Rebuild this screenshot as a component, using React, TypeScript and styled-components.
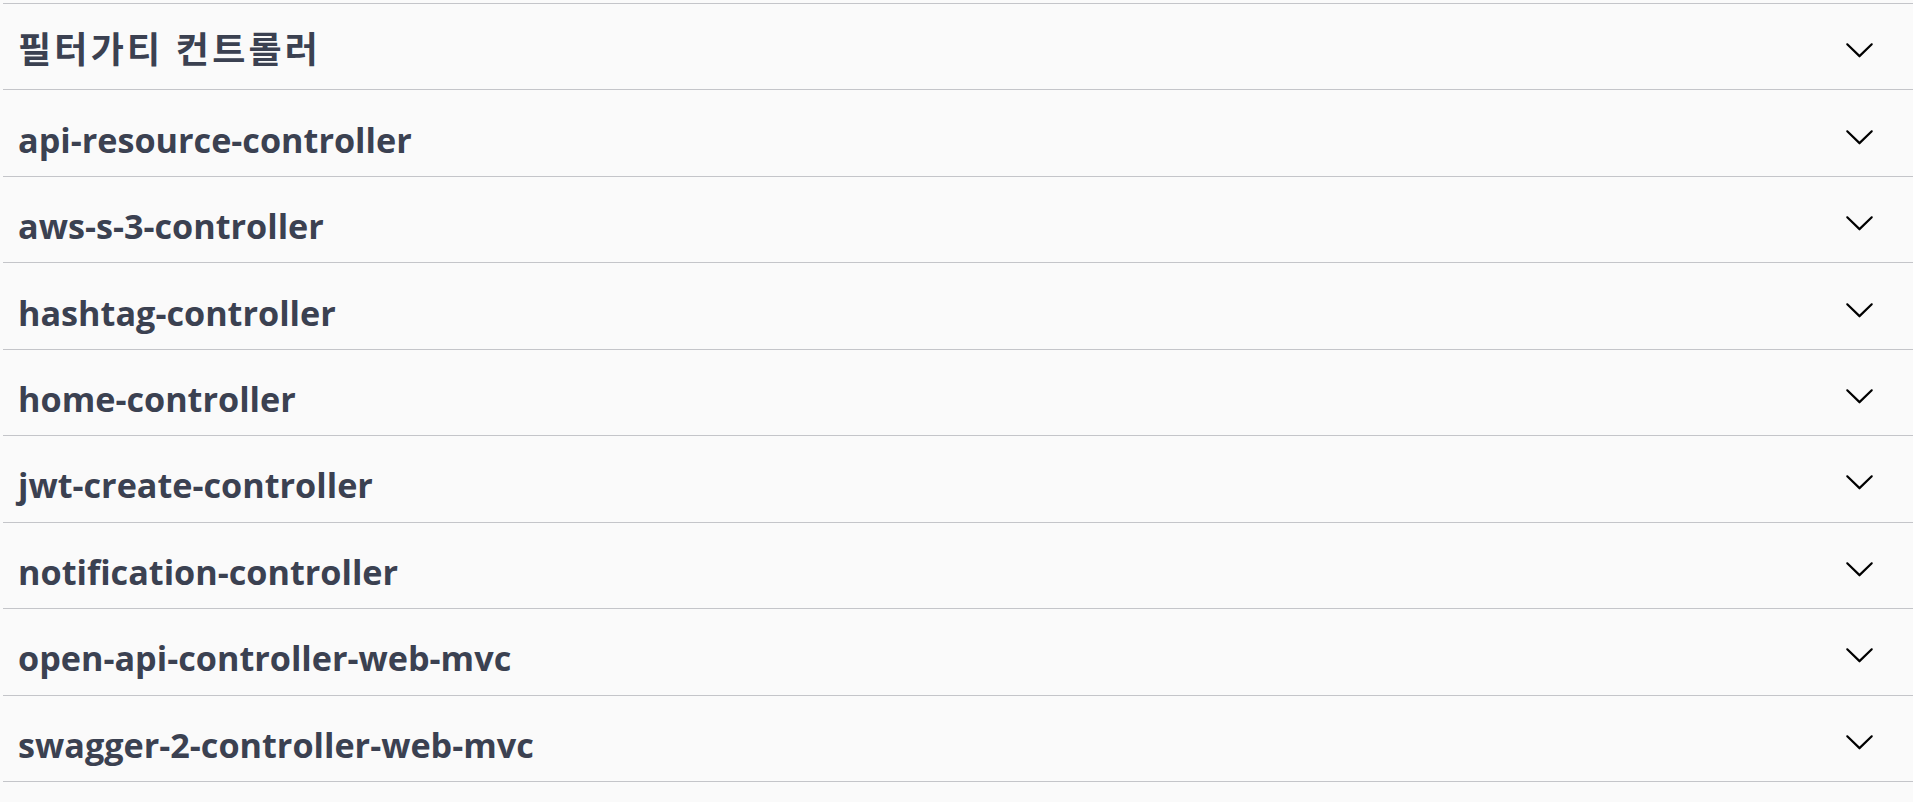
import React from "react";
import styled, { createGlobalStyle } from "styled-components";

const Global = createGlobalStyle`
  html, body { margin: 0; padding: 0; background: #fafafa; }
  body { font-family: "Noto Sans CJK KR", "Open Sans", sans-serif; }
`;

const Wrapper = styled.div`
  padding: 3px 0 0 3px;
  background: #fafafa;
  min-height: 802px;
  box-sizing: border-box;
`;

const List = styled.div`
  border-top: 1px solid #c4c5c9;
`;

const Row = styled.div`
  display: flex;
  align-items: center;
  justify-content: space-between;
  height: 86.44px;
  box-sizing: border-box;
  border-bottom: 1px solid #c4c5c9;
  padding: 0 38px 0 15px;
`;

const Title = styled.h3<{ $hangul?: boolean }>`
  margin: ${(p) => (p.$hangul ? "5px" : "12px")} 0 0;
  font-family: "Open Sans", "Noto Sans CJK KR", sans-serif;
  font-weight: 700;
  font-size: ${(p) => (p.$hangul ? "36px" : "34.2px")};
  letter-spacing: ${(p) => (p.$hangul ? "3.2px" : "0")};
  color: #3b4151;
  line-height: 1.2;
`;

const Arrow = styled.svg`
  width: 31px;
  height: 31px;
  fill: #000;
  flex-shrink: 0;
  margin-top: 6px;
`;

const tags = [
  "필터가티 컨트롤러",
  "api-resource-controller",
  "aws-s-3-controller",
  "hashtag-controller",
  "home-controller",
  "jwt-create-controller",
  "notification-controller",
  "open-api-controller-web-mvc",
  "swagger-2-controller-web-mvc",
];

export default function App() {
  return (
    <>
      <Global />
      <Wrapper>
        <List>
          {tags.map((t, i) => (
            <Row key={t}>
              <Title $hangul={i === 0}>{t}</Title>
              <Arrow viewBox="0 0 20 20">
                <path d="M17.418 6.109c.272-.268.709-.268.979 0s.271.701 0 .969l-7.908 7.83c-.27.268-.707.268-.979 0l-7.908-7.83c-.27-.268-.27-.701 0-.969.271-.268.709-.268.979 0L10 13.25l7.418-7.141z" />
              </Arrow>
            </Row>
          ))}
        </List>
      </Wrapper>
    </>
  );
}
